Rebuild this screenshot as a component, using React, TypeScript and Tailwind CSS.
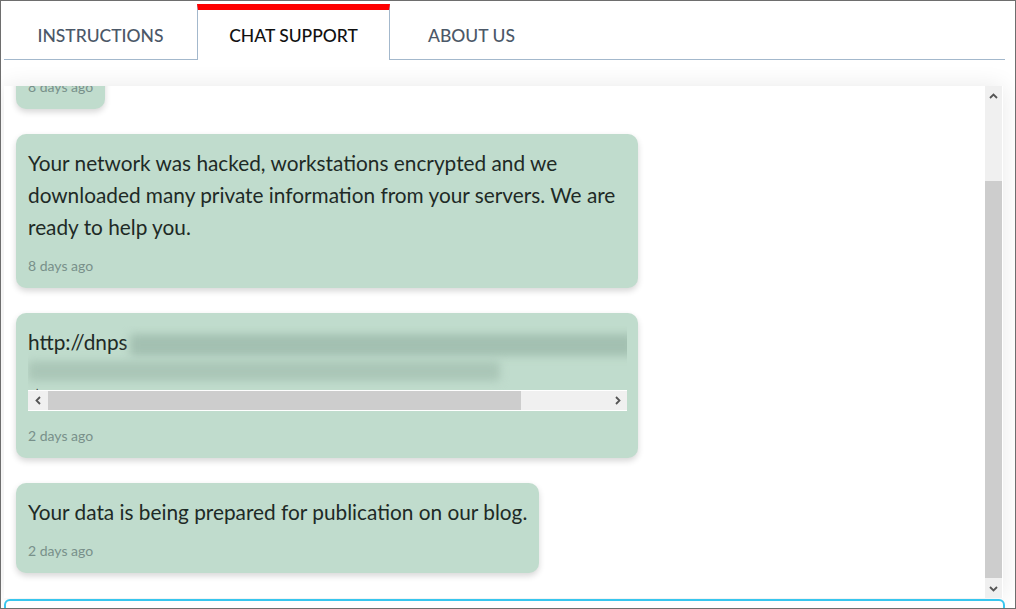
import React from "react";

const font = { fontFamily: '"Lato", "Open Sans", sans-serif' };

function Bubble({ children, time, className = "" }: { children?: React.ReactNode; time: string; className?: string }) {
  return (
    <div
      className={`bg-[#c0dccd] rounded-[10px] shadow-[0_3px_6px_rgba(0,0,0,0.16)] px-[12px] pt-[13px] pb-[12px] text-[#1e2a26] ${className}`}
    >
      {children}
      <div className="text-[14px] leading-[20px] text-[#78908a] whitespace-nowrap">{time}</div>
    </div>
  );
}

function Arrow({ dir }: { dir: "up" | "down" | "left" | "right" }) {
  const d = {
    up: "M2 7 L5.5 3.5 L9 7",
    down: "M2 4 L5.5 7.5 L9 4",
    left: "M7 2 L3.5 5.5 L7 9",
    right: "M4 2 L7.5 5.5 L4 9",
  }[dir];
  return (
    <svg width="11" height="11" viewBox="0 0 11 11">
      <path d={d} fill="none" stroke="#555" strokeWidth="1.8" />
    </svg>
  );
}

export default function App() {
  return (
    <div className="w-[1016px] h-[609px] border border-[#6e6e6e] bg-white overflow-hidden flex flex-col" style={font}>
      {/* Tabs */}
      <div className="flex pl-[3px] pr-[10px] pt-[3px] h-[59px] shrink-0">
        <div className="w-[193px] h-full border-b border-[#a3b8cc] flex items-center justify-center pt-[10px] text-[17.5px] font-medium text-[#4c5868]">
          INSTRUCTIONS
        </div>
        <div className="w-[193px] h-full border-t-[6px] border-t-[#ff0000] border-x border-x-[#a3b8cc] flex items-center justify-center pt-[2px] text-[17.5px] font-medium text-[#111]">
          CHAT SUPPORT
        </div>
        <div className="w-[163px] h-full border-b border-[#a3b8cc] flex items-center justify-center pt-[10px] text-[17.5px] font-medium text-[#4c5868]">
          ABOUT US
        </div>
        <div className="flex-1 h-full border-b border-[#a3b8cc]" />
      </div>

      {/* Chat box */}
      <div className="mt-[26px] ml-[3px] w-[999px] h-[512px] shrink-0 bg-white shadow-[0_0_22px_rgba(0,0,0,0.09)] flex overflow-hidden">
        <div className="flex-1 overflow-hidden pl-[12px]">
          <div className="flex flex-col items-start gap-[25px] mt-[-22px]">
            <Bubble time="8 days ago" className="pt-[0px]" />
            <Bubble time="8 days ago" className="w-[622px]">
              <div className="text-[20.8px] leading-[32px] mb-[13px]">
                Your network was hacked, workstations encrypted and we downloaded many private information from your servers. We are ready to help you.
              </div>
            </Bubble>
            <Bubble time="2 days ago" className="w-[622px]">
              <div className="w-[599px] overflow-hidden mb-[15px]">
                <div className="whitespace-nowrap text-[20.8px] leading-[32px]">
                  http://dnps
                  <span className="inline-block align-middle ml-[2px] h-[22px] w-[505px] bg-[#a3c0b1] blur-[4px] rounded-[4px]" />
                </div>
                <div className="h-[26px] flex items-center">
                  <span className="inline-block h-[20px] w-[472px] bg-[#aac6b7] blur-[4px] rounded-[4px]" />
                </div>
                <div className="h-[6px] text-[10px] leading-[4px] pl-[8px] text-[#333]">.</div>
                <div className="h-[21px] flex bg-[#f0f0f0] border-y border-white">
                  <div className="w-[20px] flex items-center justify-center"><Arrow dir="left" /></div>
                  <div className="w-[473px] bg-[#cdcdcd]" />
                  <div className="flex-1" />
                  <div className="w-[20px] flex items-center justify-center"><Arrow dir="right" /></div>
                </div>
              </div>
            </Bubble>
            <Bubble time="2 days ago">
              <div className="text-[20.8px] leading-[32px] mb-[13px] whitespace-nowrap">
                Your data is being prepared for publication on our blog.
              </div>
            </Bubble>
          </div>
        </div>
        {/* vertical scrollbar */}
        <div className="w-[17px] ml-[1px] mr-[1px] bg-[#f0f0f0] flex flex-col">
          <div className="h-[20px] flex items-center justify-center"><Arrow dir="up" /></div>
          <div className="h-[75px]" />
          <div className="flex-1 bg-[#cdcdcd]" />
          <div className="h-[20px] flex items-center justify-center"><Arrow dir="down" /></div>
        </div>
      </div>

      {/* input */}
      <div className="mt-[1px] ml-[3px] w-[1001px] h-[20px] shrink-0 border-2 border-[#38c6ee] rounded-t-[6px] bg-white" />
    </div>
  );
}
